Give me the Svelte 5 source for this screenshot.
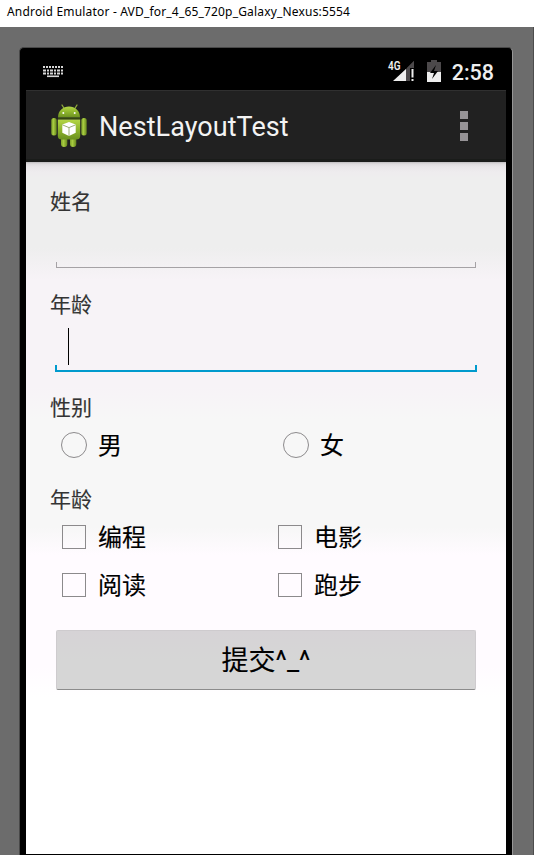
<script>
  const hobbies = ['编程', '电影', '阅读', '跑步'];
  const genders = ['男', '女'];
</script>

<div class="window">
  <header class="title"><span>Android Emulator - AVD_for_4_65_720p_Galaxy_Nexus:5554</span></header>
  <div class="desk">
    <div class="device">
      <div class="status">
        <svg class="keyboard" width="20" height="12" viewBox="0 0 20 12">
          <g stroke="#d8d8d8" stroke-width="2" fill="none">
            <path d="M0 1H20" stroke-dasharray="2 1" />
            <path d="M0 4.5H20" stroke-dasharray="3 1 2 1" />
            <path d="M0 7.5H20" stroke-dasharray="3 1 2 1" />
            <path d="M4 10.3H16" stroke-width="1.6" />
          </g>
        </svg>
        <span class="grow"></span>
        <svg class="signal" width="28" height="30" viewBox="0 -6 28 30">
          <path d="M26 2V22H6Z" fill="#4c494b" />
          <path d="M18 10V22H5Z" fill="#eee" />
          <path d="M22 9H27V22H22Z" fill="#000" />
          <path d="M26 2V9H19Z" fill="#4c494b" />
          <path d="M23.5 10H25.5V18.5H23.5ZM23.5 20H25.5V22H23.5Z" fill="#eee" />
          <text x="0" y="11" font-size="13" font-weight="600" textLength="12.5" lengthAdjust="spacingAndGlyphs" fill="#eee">4G</text>
        </svg>
        <svg class="battery" width="14" height="22" viewBox="0 0 14 22">
          <path d="M4 0H10V2H14V22H0V2H4Z" fill="#4c494b" />
          <path d="M0 12H14V22H0Z" fill="#eee" />
          <path d="M9 5L3 13H7L5 19L11 11H7Z" fill="#000" />
        </svg>
        <span class="clock">2:58</span>
      </div>
      <div class="actionbar">
        <svg class="robot" width="38" height="44" viewBox="0 0 38 44">
          <defs>
            <linearGradient id="green" x1="0" y1="0" x2="0" y2="1">
              <stop offset="0" stop-color="#b3d645" />
              <stop offset=".5" stop-color="#8fb52d" />
              <stop offset="1" stop-color="#6b9020" />
            </linearGradient>
            <linearGradient id="shade" x1="0" y1="0" x2="1" y2="0">
              <stop offset="0" stop-color="#7fa22b" />
              <stop offset=".4" stop-color="#a7cb40" />
              <stop offset="1" stop-color="#66861d" />
            </linearGradient>
          </defs>
          <path d="M12 1L14.5 5M27 1L24.5 5" stroke="#8eaa3b" stroke-width="1.3" stroke-linecap="round" />
          <rect x="1.3" y="14" width="5.4" height="17.5" rx="2.5" fill="url(#shade)" />
          <rect x="31.3" y="14" width="5.4" height="17.5" rx="2.5" fill="url(#shade)" />
          <rect x="11" y="32" width="6.3" height="11" rx="3" fill="url(#shade)" />
          <rect x="20" y="32" width="6.3" height="11" rx="3" fill="url(#shade)" />
          <path d="M8 13.5C8 6.5 13 2.5 19 2.5S30 6.5 30 13.5Z" fill="url(#green)" />
          <path d="M7.8 15.5H30.2V32Q30 35.5 26.5 35.5H11.5Q8 35.5 7.8 32Z" fill="url(#green)" />
          <path d="M8 14.5H30" stroke="#35480f" />
          <circle cx="13.3" cy="9" r="1" fill="#fff" /><circle cx="24.7" cy="9" r="1" fill="#fff" />
          <path d="M19 18L25.7 20.5V28.8L19 32L12.3 28.8V20.5Z" fill="#fff" />
          <path d="M12.3 20.8L19 23.6L25.7 20.8M19 23.6V32" stroke="#9cae76" fill="none" />
        </svg>
        <span class="app">NestLayoutTest</span>
        <span class="grow"></span>
        <span class="more"><i></i><i></i><i></i></span>
      </div>
      <main>
        <div class="label">姓名</div>
        <div class="field"><div class="line"></div></div>
        <div class="label">年龄</div>
        <div class="field"><div class="line focus"><span class="caret"></span></div></div>
        <div class="label">性别</div>
        <div class="options radios">
          {#each genders as g}
            <div class="option"><span class="circle"></span><span class="name">{g}</span></div>
          {/each}
        </div>
        <div class="label">年龄</div>
        <div class="options">
          {#each hobbies as h}
            <div class="option"><span class="box"></span><span class="name">{h}</span></div>
          {/each}
        </div>
        <div class="submit"><span>提交^_^</span></div>
      </main>
    </div>
  </div>
</div>

<style>
  .window { width: 534px; height: 855px; display: flex; flex-direction: column; overflow: hidden; box-sizing: border-box; background: #6c6c6c; font-family: Roboto, "Noto Sans CJK SC", sans-serif; }
  .title { height: 27px; flex: none; background: #fff; box-sizing: border-box; padding: 3px 0 0 7px; font: 12px/18px "Noto Sans", "Open Sans", sans-serif; letter-spacing: .18px; color: #000; white-space: nowrap; }
  .desk { flex: 1; box-sizing: border-box; padding: 20px 0 0 19px; border-right: 1px solid #4d4d4d; }
  .device { width: 494px; height: 808px; box-sizing: border-box; border: 1px solid #484848; border-right-color: #969696; border-bottom: 0; border-radius: 5px 5px 0 0; background: #000; padding: 0 6px 1px; display: flex; flex-direction: column; }
  .status { height: 42px; flex: none; display: flex; align-items: flex-start; }
  .keyboard { margin: 18px 0 0 17px; }
  .grow { flex: 1; }
  .signal { margin: 5px 11px 0 0; overflow: visible; }
  .battery { margin: 12px 11px 0 0; }
  .clock { color: #eee; font-size: 21.5px; font-weight: 500; line-height: 26px; margin: 12px 12px 0 0; }
  .actionbar { height: 72px; flex: none; box-sizing: border-box; display: flex; align-items: center; background: #212121; border-top: 1px solid #303030; border-bottom: 3px solid #1a1c1a; }
  .robot { margin: 1px 0 0 24px; }
  .app { margin: 3px 0 0 11px; color: #f3f3f3; font-size: 27px; line-height: 32px; letter-spacing: .05px; white-space: nowrap; }
  .more { display: flex; flex-direction: column; gap: 3px; margin-right: 38px; margin-top: 1px; }
  .more i { width: 8px; height: 8px; background: #969396; }
  main { flex: 1; padding: 26px 30px 0 24px; background: linear-gradient(#bdbbbd 0, #dedcde 2px, #e8e6e8 5px, #eeecee 10px, #eee 16px, #eee 86px, #f7f3f7 118px, #f7f3f7 225px, #f7f7f7 258px, #f7f7f7 365px, #fffbff 393px, #fffbff 505px, #fff 535px); }
  .label { height: 28px; line-height: 28px; font-size: 21px; color: #333; -webkit-text-stroke: .15px #333; }
  .field { height: 75px; box-sizing: border-box; padding: 46px 0 0 6px; }
  .line { width: 420px; height: 6px; box-sizing: border-box; border: 1px solid #a5a2a5; border-top: 0; }
  .line.focus { position: relative; width: 422px; height: 7px; border-width: 2px; border-color: #009acd; margin: 0 0 0 -1px; }
  .caret { position: absolute; left: 11px; bottom: 5px; width: 1px; height: 37px; background: #000; }
  .options { display: grid; grid-template-columns: 216px 1fr; grid-auto-rows: 48px; padding-left: 11px; margin-top: -1px; color: #000; font-size: 24px; }
  .radios { grid-template-columns: 222px 1fr; padding-left: 10px; margin-bottom: 17px; }
  .option { display: flex; align-items: center; line-height: 36px; }
  .name { padding-top: 2px; -webkit-text-stroke: .15px #000; }
  .box { width: 24px; height: 24px; box-sizing: border-box; border: 1px solid #8c8a8c; margin: 0 12px 0 1px; }
  .circle { width: 26px; height: 26px; box-sizing: border-box; border: 1px solid #8c8a8c; border-radius: 50%; margin: 0 11px 0 1px; }
  .submit { margin: 21px 0 0 6px; width: 420px; height: 60px; box-sizing: border-box; border: 1px solid #cecbce; border-bottom-color: #8c8c8c; border-radius: 2px; background: linear-gradient(#d6d3d6, #d6d6d6 50%); color: #000; font-size: 27px; line-height: 60px; text-align: center; -webkit-text-stroke: .1px #000; }
</style>
